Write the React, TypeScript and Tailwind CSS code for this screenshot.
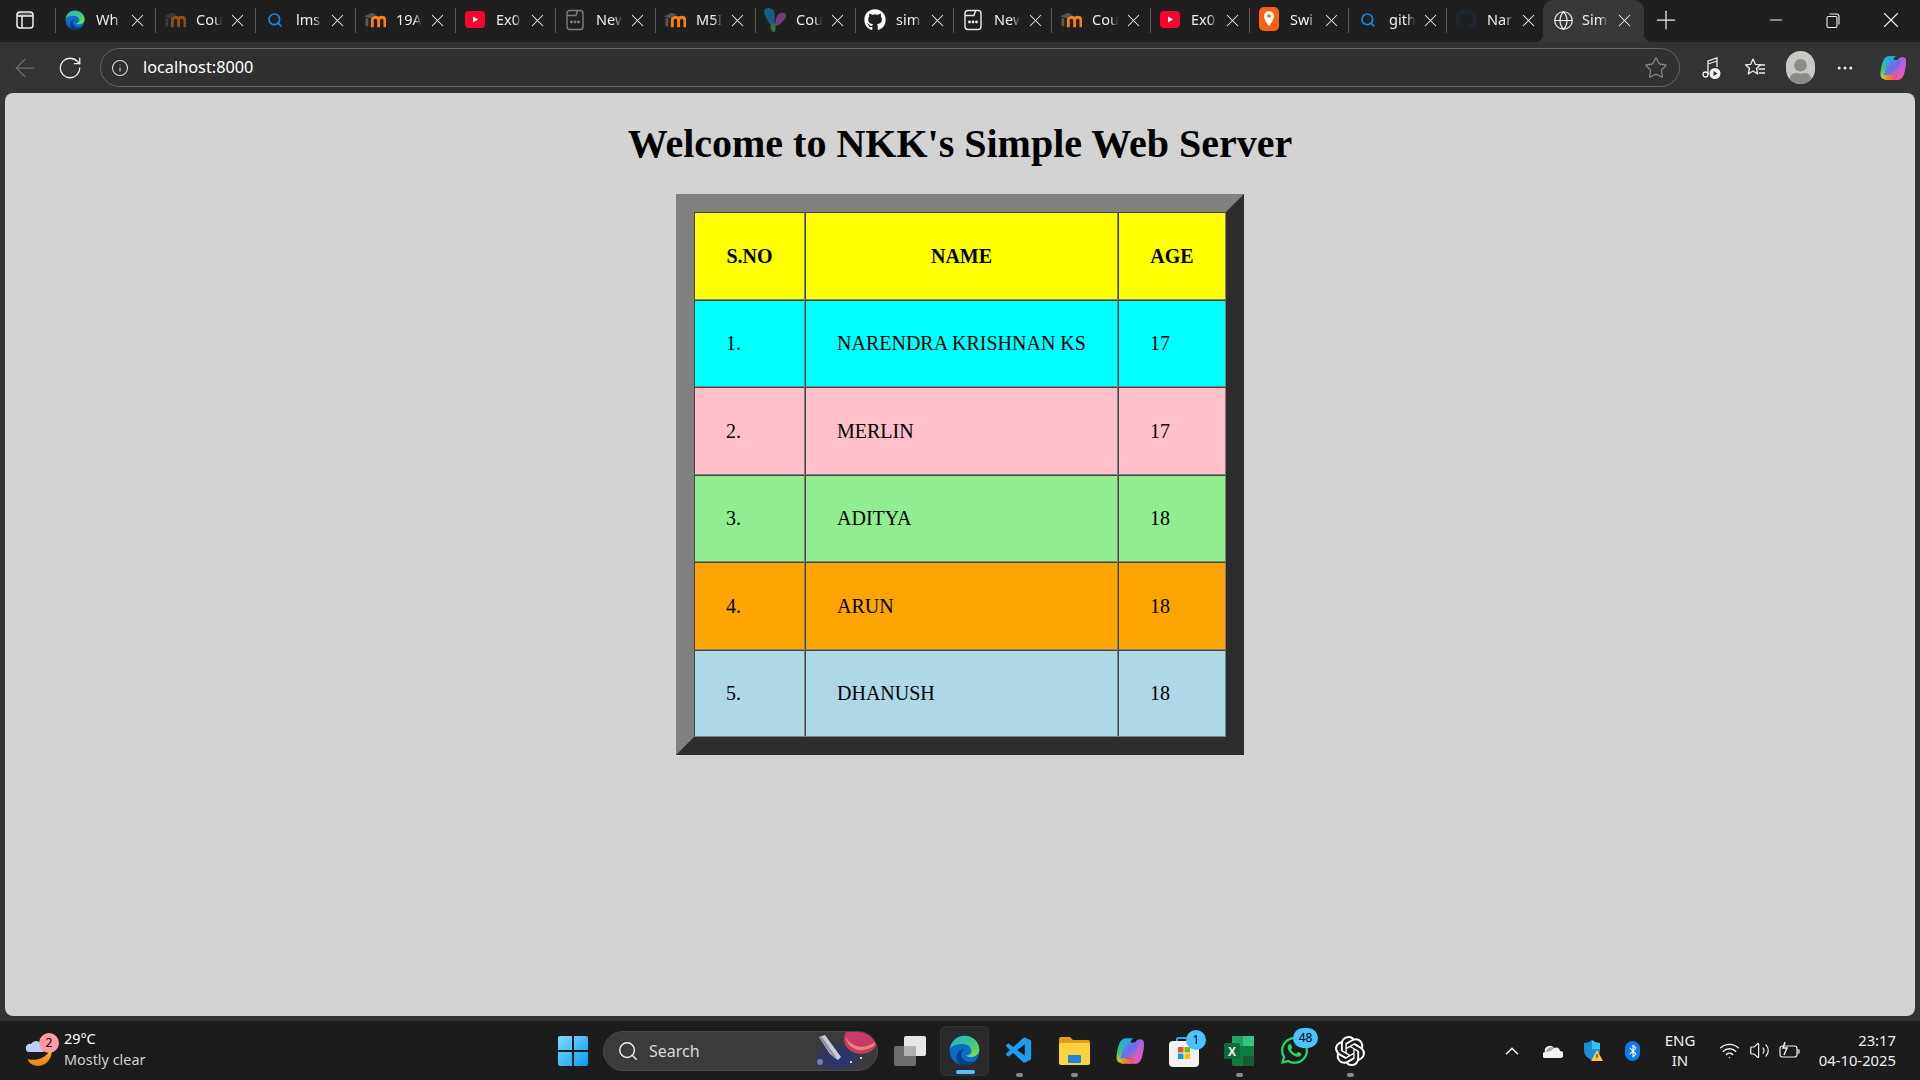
import React from "react";
import { X, Plus, Minus, RotateCw, ArrowLeft, Info, Star, Globe, Search, ChevronUp, Wifi, Volume2, Bluetooth, MoreHorizontal } from "lucide-react";
import { FaGithub, FaWhatsapp, FaUser } from "react-icons/fa";
import { VscVscode } from "react-icons/vsc";
import { SiOpenai } from "react-icons/si";

const Edge = ({ s = 20 }: { s?: number }) => (
  <svg width={s} height={s} viewBox="0 0 24 24">
    <defs>
      <linearGradient id="eg1" x1="0" y1="0" x2="1" y2="1"><stop offset="0" stopColor="#1fb6d8" /><stop offset="0.6" stopColor="#40c978" /><stop offset="1" stopColor="#8fe04e" /></linearGradient>
    </defs>
    <circle cx="12" cy="12" r="11.5" fill="#0a6fc4" />
    <path d="M.6 11C1.500 4.500 6.500.5 12 .5c6.500 0 11.500 5 11.500 10.500 0 4-3.500 6-6.500 6-2 0-3.500-.6-4-1.200 2.600.2 4.300-1.300 4.300-3.500 0-3-3-5.300-6.300-5.300C6 7 2 8.200.6 11z" fill="url(#eg1)" />
    <path d="M9 23.200C5 21.500 5 15 8 12.500c1-.8 2.500-1.300 3.800-1.200-1.300.7-2.300 2-2.300 3.700 0 3.500 3.500 5.800 7 5.800 1.300 0 2.300-.2 3.200-.6-2 2.300-6.500 4.200-10.700 3z" fill="#073d8c" />
  </svg>
);
const Moodle = ({ dim = false }: { dim?: boolean }) => (
  <svg width="22" height="18" viewBox="0 0 24 20" opacity={dim ? 0.5 : 1}>
    <path d="M3 17V8" fill="none" stroke="#5b5b5b" strokeWidth="3" />
    <path d="M9 18V10.500C9 8 10.500 7 12.500 7S16 8 16 10.500V18M16 10.500c0-2.500 1.500-3.500 3.500-3.500s3.500 1 3.500 3.500V18" fill="none" stroke="#f98012" strokeWidth="3.200" />
    <path d="M0 6l8-4 6 2-7 4z" fill="#555" />
  </svg>
);
const Yt = () => (
  <svg width="20" height="20" viewBox="0 0 20 20"><rect y="1" width="20" height="17" rx="4" fill="#ff0033" /><path d="M8 6.500l5 3-5 3z" fill="#fff" /></svg>
);
const NewTabIcon = ({ dim = false }: { dim?: boolean }) => (
  <svg width="20" height="22" viewBox="0 0 20 22" fill="none" stroke={dim ? "#7d7d7d" : "#e8e8e8"} strokeWidth="1.400">
    <rect x="2" y="1.500" width="16" height="19" rx="3" /><path d="M2 6.500h9l1.500-5" /><circle cx="6.500" cy="13" r=".7" fill="#ddd" /><circle cx="10" cy="13" r=".7" fill="#ddd" /><circle cx="13.500" cy="13" r=".7" fill="#ddd" />
  </svg>
);
const Butterfly = () => (
  <svg width="22" height="26" viewBox="0 0 22 26">
    <path d="M0 4c0-4 8-4 10 0 1 4 1 9 0 13-1 3-4 1-6-3C2 10 0 8 0 4z" fill="#175f80" />
    <path d="M22 8c0-3-7-3-9 1-1 3-2 6-2 9 1 2 4 0 6-2 2-2 5-4 5-8z" fill="#7c3a80" />
    <path d="M7 17c-1 3 0 8 2.500 8s2.500-5 1.500-9z" fill="#35704a" />
  </svg>
);
const Swiggy = () => (
  <svg width="20" height="26" viewBox="0 0 20 26"><rect y="0" width="20" height="24" rx="5" fill="#fc6011" /><path d="M10 4a5 5 0 0 0-5 5c0 4 5 10 5 10s5-6 5-10a5 5 0 0 0-5-5z" fill="#fff" /><circle cx="10" cy="9" r="1.800" fill="#fc6011" /></svg>
);
const BlueSearch = () => <Search size={16} color="#1a84e0" strokeWidth={2.6} />;

const CopilotIcon = ({ s, id }: { s: number; id: string }) => (
  <svg width={s} height={s} viewBox="0 0 28 28">
    <defs>
      <linearGradient id={id + "a"} x1="0" y1="0" x2="0" y2="1"><stop offset="0" stopColor="#1fa8f0" /><stop offset="0.6" stopColor="#3cc86a" /><stop offset="1" stopColor="#e8c020" /></linearGradient>
      <linearGradient id={id + "b"} x1="0" y1="0" x2="0" y2="1"><stop offset="0" stopColor="#a85cf0" /><stop offset="1" stopColor="#ee5cb0" /></linearGradient>
      <linearGradient id={id + "c"} x1="0" y1="0" x2="1" y2="1"><stop offset="0" stopColor="#2fb0f0" /><stop offset="0.5" stopColor="#6a6cf0" /><stop offset="1" stopColor="#f0609a" /></linearGradient>
      <linearGradient id={id + "d"} x1="0" y1="0" x2="1" y2="0"><stop offset="0" stopColor="#f0a020" /><stop offset="1" stopColor="#f04070" /></linearGradient>
    </defs>
    <path d="M10 2h8c-2 0-3 1.500-3.500 4L11 20c-.8 3-2.500 5-5.500 5C2 25 1 22 1.500 18 2.500 11 4 2 10 2z" fill={`url(#${id}a)`} />
    <path d="M19 26h-9c2.500 0 4-2 5-5l3-13c.8-3 2.500-5 5.500-5 3.500 0 4 3 3.500 7-1 7-2 16-8 16z" fill={`url(#${id}b)`} />
    <path d="M9 6h13l-4 15H5z" fill={`url(#${id}c)`} />
    <path d="M7 21h12c-1 3-3 5-6 5H5c1 0 1.500-3 2-5z" fill={`url(#${id}d)`} />
  </svg>
);

const tabs: { t: string; i: React.ReactNode; w: string }[] = [
  { t: "Wh", i: <Edge />, w: "w-[100px]" },
  { t: "Cou", i: <Moodle dim />, w: "w-[100px]" },
  { t: "lms", i: <BlueSearch />, w: "w-[100px]" },
  { t: "19A", i: <Moodle />, w: "w-[100px]" },
  { t: "Ex0", i: <Yt />, w: "w-[100px]" },
  { t: "New", i: <NewTabIcon dim />, w: "w-[100px]" },
  { t: "M5I", i: <Moodle />, w: "w-[100px]" },
  { t: "Cou", i: <Butterfly />, w: "w-[100px]" },
  { t: "sim", i: <FaGithub size={22} color="#fff" />, w: "w-[98px]" },
  { t: "New", i: <NewTabIcon />, w: "w-[98px]" },
  { t: "Cou", i: <Moodle />, w: "w-[99px]" },
  { t: "Ex0", i: <Yt />, w: "w-[99px]" },
  { t: "Swi", i: <Swiggy />, w: "w-[99px]" },
  { t: "gith", i: <BlueSearch />, w: "w-[98px]" },
  { t: "Nar", i: <FaGithub size={22} color="#1d2733" />, w: "w-[98px]" },
];

const Tab = ({ t, i, w }: { t: string; i: React.ReactNode; w: string }) => (
  <div className={`${w} h-[42px] pb-[2px] shrink-0 flex items-center`}>
    <div className="w-px h-[25px] bg-[#5a5a5a] shrink-0" />
    <div className="w-[37px] flex justify-center shrink-0">{i}</div>
    <div className="ml-[3px] w-[30px] -mr-[4px] whitespace-nowrap text-[14.5px] text-[#eeeeee] [mask-image:linear-gradient(to_right,black_60%,transparent_87%)]">{t}</div>
    <div className="w-[30px] flex justify-center shrink-0"><X size={21} color="#eee" strokeWidth={1.2} /></div>
  </div>
);

const Count = ({ n, cls }: { n: string; cls: string }) => (
  <div className={`absolute flex items-center justify-center rounded-full text-[12px] text-black ${cls}`}>{n}</div>
);

const rows = [
  ["1.", "NARENDRA KRISHNAN KS", "17", "bg-[#00ffff]"],
  ["2.", "MERLIN", "17", "bg-[#ffc0cb]"],
  ["3.", "ADITYA", "18", "bg-[#90ee90]"],
  ["4.", "ARUN", "18", "bg-[#ffa500]"],
  ["5.", "DHANUSH", "18", "bg-[#add8e6]"],
];
const cell = "border border-t-[#444] border-l-[#444] border-r-[#808080] border-b-[#808080] px-[31px] h-[87.5px] text-[20px] text-black";

export default function App() {
  return (
    <div className="w-[1920px] h-[1080px] overflow-hidden flex flex-col bg-[#333333] [font-family:'Noto_Sans','Open_Sans',sans-serif]">
      {/* tab strip */}
      <div className="h-[42px] bg-[#1f1f1f] flex items-center shrink-0">
        <div className="w-[50px] pb-[2px] mr-[5px] shrink-0 flex justify-center">
          <svg width="18" height="18" viewBox="0 0 18 18" fill="none" stroke="#f0f0f0" strokeWidth="1.500"><rect x="1" y="1" width="16" height="16" rx="3" /><path d="M1 5h16M6 5v12" fill="none" /><rect x="2" y="2" width="14" height="3" fill="#f0f0f0" stroke="none" opacity=".25" /></svg>
        </div>
        {tabs.map((x, k) => <Tab key={k} {...x} />)}
        <div className="relative w-[101px] h-[42px] -ml-[1px] shrink-0 bg-[#383838] rounded-t-[10px] flex items-center pb-[2px]">
          <div className="absolute -left-[8px] bottom-0 w-[8px] h-[8px] [background:radial-gradient(circle_at_0_0,#1f1f1f_8px,#383838_8.5px)]" />
          <div className="absolute -right-[8px] bottom-0 w-[8px] h-[8px] [background:radial-gradient(circle_at_100%_0,#1f1f1f_8px,#383838_8.5px)]" />
          <div className="w-[39px] pl-[2px] flex justify-center"><Globe size={21} color="#eee" strokeWidth={1.4} /></div>
          <div className="w-[30px] -mr-[3px] whitespace-nowrap text-[14.5px] text-[#eee] [mask-image:linear-gradient(to_right,black_60%,transparent_87%)]">Sim</div>
          <div className="w-[30px] flex justify-center"><X size={21} color="#eee" strokeWidth={1.2} /></div>
        </div>
        <div className="ml-[7px] w-[30px] pb-[2px] shrink-0"><Plus size={30} color="#eee" strokeWidth={1} /></div>
        <div className="ml-[85px] w-[20px] pb-[2px] shrink-0"><Minus size={20} color="#eee" strokeWidth={1.2} /></div>
        <div className="ml-[40px] w-[20px] pb-[2px] shrink-0">
          <svg width="14" height="15" viewBox="0 0 14 15" fill="none" stroke="#eee" strokeWidth="1.100"><rect x="1" y="3.500" width="10" height="11" rx="1.500" /><path d="M3.500 1h7a2.500 2.500 0 0 1 2.500 2.500v8" /></svg>
        </div>
        <div className="ml-[32px] w-[24px] pb-[2px] shrink-0"><X size={26} color="#eee" strokeWidth={1} /></div>
      </div>
      {/* toolbar */}
      <div className="h-[51px] flex items-center shrink-0 bg-[#333333]">
        <div className="w-[100px] flex items-center shrink-0">
          <div className="w-[50px] flex justify-center"><ArrowLeft size={30} color="#6e6e6e" strokeWidth={1} /></div>
          <div className="w-[40px] flex justify-center"><RotateCw size={26} color="#eee" strokeWidth={1.2} /></div>
        </div>
        <div className="w-[1580px] h-[39px] shrink-0 rounded-full border border-[#666666] bg-[#303030] flex items-center pl-[10px] pr-[11px]">
          <Info size={18} color="#dddddd" strokeWidth={1.4} />
          <span className="ml-[14px] text-[16.3px] text-white grow">localhost:8000</span>
          <Star size={24} color="#8d8d8d" strokeWidth={1.2} />
        </div>
        <div className="flex items-center grow">
          <div className="ml-[20px] w-[22px] flex justify-center">
            <svg width="20" height="24" viewBox="0 0 20 24" fill="none" stroke="#eee" strokeWidth="1.300"><circle cx="4.500" cy="18.500" r="2.500" /><path d="M7 18V5l9-3v9" /><path d="M7 8l9-3" /><circle cx="14" cy="17.500" r="5.500" fill="#eee" stroke="none" /><path d="M12.500 15l4 2.500-4 2.500z" fill="#333" stroke="none" /></svg>
          </div>
          <div className="ml-[22px] w-[22px]">
            <svg width="22" height="22" viewBox="0 0 22 22" fill="none" stroke="#eee" strokeWidth="1.300" strokeLinejoin="round"><path d="M9 2l2.300 5.300 5.200.5-4 3.700 1.200 5.500L9 14l-4.700 3 1.200-5.500-4-3.700 5.200-.5z" /><path d="M15 8h6M14.500 12h6.500M15 16h6" /></svg>
          </div>
          <div className="ml-[20px] w-[29px] h-[33px] rounded-full bg-[#c8c8c4] overflow-hidden flex items-end justify-center"><FaUser size={25} color="#8b8b87" /></div>
          <div className="ml-[20px] w-[20px] flex justify-center"><MoreHorizontal size={22} color="#eee" strokeWidth={1.6} /></div>
          <div className="ml-[24px] w-[28px]"><CopilotIcon s={28} id="ca" /></div>
        </div>
      </div>
      {/* page */}
      <div className="mx-[5px] h-[923px] shrink-0 bg-[#d3d3d3] rounded-[8px] flex flex-col items-center [font-family:'Liberation_Serif',serif]">
        <h1 className="mt-[28px] mb-[27px] text-[40px] leading-[46px] font-bold text-black">Welcome to NKK's Simple Web Server</h1>
        <table className="border-separate border-spacing-0 border-[18px] border-t-[#808080] border-l-[#808080] border-r-[#2d2d2d] border-b-[#2d2d2d] table-fixed w-[568px]">
          <colgroup>
            <col className="w-[111px]" /><col className="w-[313px]" /><col className="w-[108px]" />
          </colgroup>
          <thead>
            <tr className="bg-[#ffff00]">
              <th className={cell + " text-center"}>S.NO</th>
              <th className={cell + " text-center"}>NAME</th>
              <th className={cell + " text-center"}>AGE</th>
            </tr>
          </thead>
          <tbody>
            {rows.map((r) => (
              <tr key={r[0]} className={r[3]}>
                <td className={cell}>{r[0]}</td>
                <td className={cell}>{r[1]}</td>
                <td className={cell}>{r[2]}</td>
              </tr>
            ))}
          </tbody>
        </table>
      </div>
      <div className="h-[5px] shrink-0" />
      {/* taskbar */}
      <div className="h-[59px] shrink-0 bg-[#1c1c1c] flex items-center text-[#f0f0f0]">
        <div className="relative ml-[24px] w-[30px] h-[34px] shrink-0">
          <svg width="30" height="34" viewBox="0 0 30 34">
            <defs><linearGradient id="moon" x1="0" y1="0" x2="0" y2="1"><stop offset="0" stopColor="#fbc02d" /><stop offset="1" stopColor="#ef7c17" /></linearGradient></defs>
            <path d="M28 13c1 10-5 19-14 19-6 0-10-4-10-7 9 3 20-2 24-12z" fill="url(#moon)" />
            <path d="M2 15a4 4 0 0 1 5-5 6 6 0 0 1 11 2 3 3 0 0 1 0 6H4a3 3 0 0 1-2-3z" fill="#b9d3f4" />
          </svg>
          <Count n="2" cls="-top-[1px] left-[15px] w-[20px] h-[20px] bg-[#ff9aa8]" />
        </div>
        <div className="ml-[10px] -mt-[4px] w-[110px] shrink-0">
          <div className="text-[14.4px] leading-[21px] text-white">29°C</div>
          <div className="text-[14.4px] leading-[21px] text-[#d0d0d0] whitespace-nowrap">Mostly clear</div>
        </div>
        <div className="ml-[384px] w-[30px] shrink-0">
          <svg width="30" height="30" viewBox="0 0 30 30">
            <defs><linearGradient id="win" x1="0" y1="0" x2="1" y2="1"><stop offset="0" stopColor="#7fdcff" /><stop offset="1" stopColor="#0a9bf0" /></linearGradient></defs>
            <path d="M0 2a2 2 0 0 1 2-2h12v14H0zM16 0h12a2 2 0 0 1 2 2v12H16zM0 16h14v14H2a2 2 0 0 1-2-2zM16 16h14v12a2 2 0 0 1-2 2H16z" fill="url(#win)" />
          </svg>
        </div>
        <div className="ml-[15px] w-[275px] h-[40px] shrink-0 rounded-full bg-[#3b3b3b] border border-[#4a4a4a] flex items-center overflow-hidden">
          <Search size={22} color="#eee" strokeWidth={1.6} className="ml-[13px]" />
          <span className="ml-[10px] text-[16px] text-[#d8d8d8] grow">Search</span>
          <svg width="62" height="38" viewBox="0 0 62 38">
            <defs><radialGradient id="sky"><stop offset="0" stopColor="#24327a" /><stop offset="1" stopColor="#3b3b3b" /></radialGradient></defs>
            <ellipse cx="24" cy="26" rx="28" ry="18" fill="url(#sky)" />
            <ellipse cx="46" cy="7" rx="17" ry="15" fill="#c93a6a" />
            <path d="M30 4c6 12 20 14 30 6v3c-10 8-26 8-30-9z" fill="#e08a70" />
            <path d="M4 5l6-2 16 22-3 3-8-6z" fill="#c8ccd8" />
            <path d="M4 5l3 0 14 20-2 1z" fill="#8a90a0" />
            <circle cx="5" cy="30" r="3" fill="#6a80c0" />
            <circle cx="36" cy="30" r="1" fill="#fff" /><circle cx="46" cy="26" r="1" fill="#fff" />
          </svg>
        </div>
        <div className="ml-[16px] w-[32px] shrink-0">
          <svg width="32" height="30" viewBox="0 0 32 30"><rect x="0" y="10" width="22" height="20" rx="2" fill="#6e6e6e" /><rect x="10" y="0" width="22" height="20" rx="2" fill="#e6e6e6" /><rect x="10" y="10" width="12" height="10" fill="#b0b0b0" /></svg>
        </div>
        <div className="relative ml-[14px] w-[49px] h-[50px] shrink-0 rounded-[5px] bg-[#2a2a2a] border border-[#333] flex items-center justify-center">
          <Edge s={31} />
          <div className="absolute bottom-[1px] left-[15px] w-[19px] h-[4px] rounded bg-[#4cc2ff]" />
        </div>
        <div className="relative ml-[15px] w-[31px] shrink-0 flex justify-center">
          <VscVscode size={32} color="#1f9cf0" />
          <div className="absolute -bottom-[10px] left-[12px] w-[7px] h-[4px] rounded bg-[#8a8a8a]" />
        </div>
        <div className="relative ml-[24px] w-[31px] shrink-0">
          <svg width="31" height="29" viewBox="0 0 31 29"><path d="M0 3a2 2 0 0 1 2-2h9l3 3h15a2 2 0 0 1 2 2v4H0z" fill="#e0a015" /><rect y="7" width="31" height="22" rx="2" fill="#ffd340" /><rect x="9" y="19" width="13" height="8" rx="1" fill="#1b87d8" /></svg>
          <div className="absolute -bottom-[12px] left-[12px] w-[7px] h-[4px] rounded bg-[#8a8a8a]" />
        </div>
        <div className="ml-[25px] w-[30px] shrink-0"><CopilotIcon s={30} id="cb" /></div>
        <div className="relative ml-[24px] w-[30px] h-[30px] shrink-0">
          <svg width="30" height="32" viewBox="0 0 30 32" className="-mt-[1px]"><path d="M8 7V3M22 7V3" stroke="#29a8f0" strokeWidth="2" /><path d="M8 3h14" stroke="#29a8f0" strokeWidth="2" /><rect x="0" y="6" width="30" height="26" rx="4" fill="#f2f2f2" /><rect x="9" y="12" width="5.500" height="5.500" fill="#f25022" /><rect x="15.500" y="12" width="5.500" height="5.500" fill="#7fba00" /><rect x="9" y="18.500" width="5.500" height="5.500" fill="#00a4ef" /><rect x="15.500" y="18.500" width="5.500" height="5.500" fill="#ffb900" /></svg>
          <Count n="1" cls="-top-[6px] left-[17px] w-[20px] h-[20px] bg-[#4cc2ff]" />
        </div>
        <div className="relative ml-[25px] w-[30px] h-[30px] shrink-0">
          <svg width="30" height="30" viewBox="0 0 30 30"><rect x="8" y="0" width="22" height="30" rx="2" fill="#107c41" /><rect x="19" y="0" width="11" height="10" fill="#33c481" /><rect x="8" y="0" width="11" height="10" fill="#21a366" /><rect x="19" y="20" width="11" height="10" fill="#185c37" /><rect x="0" y="7" width="16" height="16" rx="1.500" fill="#0e6b38" /><text x="8" y="20" textAnchor="middle" fontSize="12" fontWeight="700" fill="#fff" fontFamily="Liberation Sans">X</text></svg>
          <div className="absolute -bottom-[11px] left-[12px] w-[7px] h-[4px] rounded bg-[#8a8a8a]" />
        </div>
        <div className="relative ml-[25px] w-[31px] h-[31px] shrink-0">
          <FaWhatsapp size={31} color="#25d366" />
          <Count n="48" cls="-top-[7px] left-[14px] w-[25px] h-[20px] bg-[#4cc2ff]" />
        </div>
        <div className="relative ml-[25px] w-[30px] h-[30px] shrink-0">
          <SiOpenai size={30} color="#fff" />
          <div className="absolute -bottom-[11px] left-[12px] w-[7px] h-[4px] rounded bg-[#8a8a8a]" />
        </div>
        <div className="ml-[136px] w-[22px] flex justify-center shrink-0"><ChevronUp size={24} color="#eee" strokeWidth={1.8} /></div>
        <div className="ml-[20px] w-[20px] shrink-0">
          <svg width="20" height="14" viewBox="0 0 20 14"><path d="M3 14a3 3 0 0 1-1-6 5 5 0 0 1 9-4 4 4 0 0 1 6 3 3.500 3.500 0 0 1 0 7z" fill="#f4f4f4" /><path d="M3 8a5 5 0 0 1 8-4l-3 3z" fill="#a8a8a8" /></svg>
        </div>
        <div className="ml-[20px] w-[20px] shrink-0">
          <svg width="20" height="21" viewBox="0 0 20 21"><path d="M9 0c2 2 5 3 8 3v7c0 5-3 8-8 10-5-2-8-5-8-10V3c3 0 6-1 8-3z" fill="#1b8fd8" /><path d="M9 0c2 2 5 3 8 3v6H9z" fill="#33c4ef" /><path d="M14 10l6 11H8z" fill="#ffc83d" /><rect x="13.500" y="14" width="1" height="4" fill="#222" /></svg>
        </div>
        <div className="ml-[22px] w-[15px] h-[20px] rounded-full bg-[#0a7be8] flex items-center justify-center shrink-0"><Bluetooth size={14} color="#fff" strokeWidth={1.8} /></div>
        <div className="ml-[15px] w-[50px] -mt-[2px] text-center text-[15px] leading-[20px] text-[#f0f0f0] shrink-0">ENG<br />IN</div>
        <div className="ml-[14px] w-[22px] shrink-0"><Wifi size={21} color="#f0f0f0" strokeWidth={1.7} /></div>
        <div className="ml-[8px] w-[22px] shrink-0"><Volume2 size={21} color="#f0f0f0" strokeWidth={1.4} /></div>
        <div className="ml-[8px] w-[22px] shrink-0">
          <svg width="22" height="18" viewBox="0 0 22 18" fill="none" stroke="#eee" strokeWidth="1.200"><rect x="1" y="4" width="17" height="11" rx="2.500" /><path d="M18 8h2v3h-2" /><path d="M6 0l-2 6h4l-3 7" stroke="#eee" strokeWidth="1.500" /></svg>
        </div>
        <div className="grow pr-[24px] -mt-[2px] text-right text-[14.8px] leading-[20px] text-[#f0f0f0] whitespace-nowrap">23:17<br />04-10-2025</div>
      </div>
    </div>
  );
}
